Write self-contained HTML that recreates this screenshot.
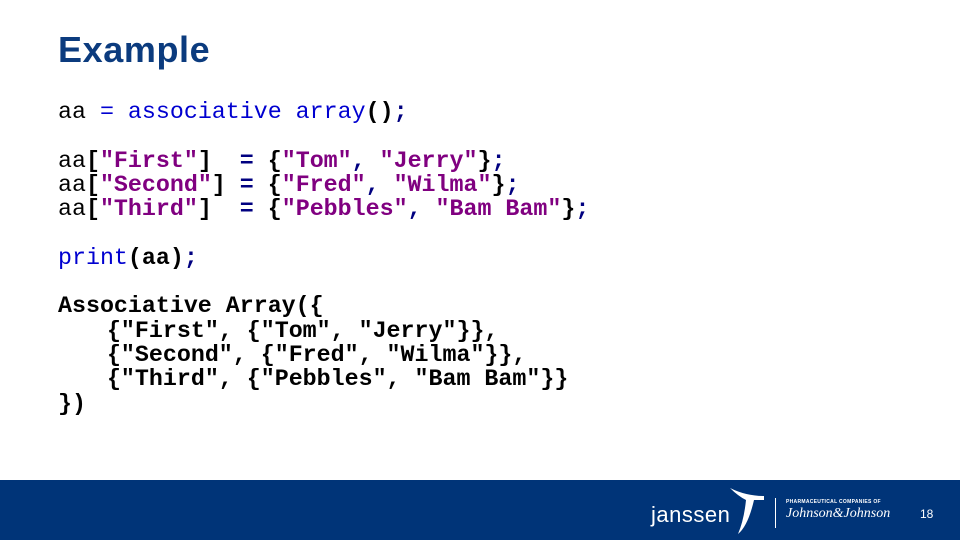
<!DOCTYPE html>
<html><head><meta charset="utf-8"><style>
body{margin:0;width:960px;height:540px;background:#fff;position:relative;overflow:hidden;font-family:"Liberation Sans",sans-serif}
h1{position:absolute;left:58px;top:30px;margin:0;font-size:36px;line-height:40px;font-weight:bold;color:#0b3b7e;letter-spacing:0.6px}
pre{position:absolute;left:58px;top:100px;margin:0;font-family:"Liberation Mono","DejaVu Sans Mono",monospace;font-size:23.3px;line-height:24.3px;color:#000}
.k{color:#0000d0}.s{color:#800080;font-weight:bold}.b{font-weight:bold}.n{color:#000080;font-weight:bold}
.i{padding-left:7px}
.foot{position:absolute;left:0;top:480px;width:960px;height:60px;background:#003478;color:#fff}
</style></head><body>
<h1>Example</h1>
<pre>aa <span class="k">= associative array</span><span class="b">()</span><span class="n">;</span>

aa<span class="b">[</span><span class="s">"First"</span><span class="b">]</span>  <span class="n">=</span> <span class="b">{</span><span class="s">"Tom"</span><span class="n">,</span> <span class="s">"Jerry"</span><span class="b">}</span><span class="n">;</span>
aa<span class="b">[</span><span class="s">"Second"</span><span class="b">]</span> <span class="n">=</span> <span class="b">{</span><span class="s">"Fred"</span><span class="n">,</span> <span class="s">"Wilma"</span><span class="b">}</span><span class="n">;</span>
aa<span class="b">[</span><span class="s">"Third"</span><span class="b">]</span>  <span class="n">=</span> <span class="b">{</span><span class="s">"Pebbles"</span><span class="n">,</span> <span class="s">"Bam Bam"</span><span class="b">}</span><span class="n">;</span>

<span class="k">print</span><span class="b">(aa)</span><span class="n">;</span>

<span class="b">Associative Array({
   <span class="i">{"First", {"Tom", "Jerry"}},</span>
   <span class="i">{"Second", {"Fred", "Wilma"}},</span>
   <span class="i">{"Third", {"Pebbles", "Bam Bam"}}</span>
})</span></pre>
<div class="foot">
<div style="position:absolute;left:651px;top:22px;font-size:22px;letter-spacing:0.5px">janssen</div>
<svg style="position:absolute;left:728px;top:6px" width="40" height="50" viewBox="0 0 40 50"><path d="M2 2 Q18 10 36 10 L36 14 L26 14 Q20 40 10 48 Q16 34 18 14 Q10 10 2 2Z" fill="#fff"/></svg>
<div style="position:absolute;left:775px;top:18px;width:1px;height:30px;background:#fff"></div>
<div style="position:absolute;left:786px;top:19px;font-size:5px;font-weight:bold;letter-spacing:0.3px">PHARMACEUTICAL COMPANIES OF</div>
<div style="position:absolute;left:786px;top:26px;font-family:'Liberation Serif',serif;font-style:italic;font-size:14px">Johnson&amp;Johnson</div>
<div style="position:absolute;left:920px;top:27px;font-size:12px">18</div>
</div>
</body></html>
